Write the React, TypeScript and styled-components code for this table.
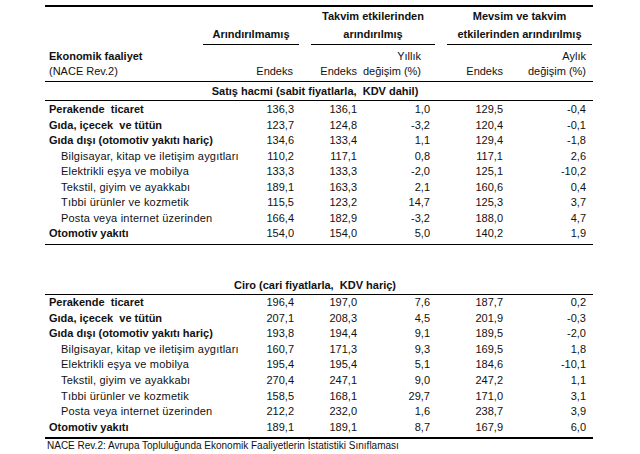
import React from "react";
import styled, { createGlobalStyle } from "styled-components";

const Global = createGlobalStyle`
  html, body { margin: 0; padding: 0; background: #fff; }
  body { font-family: "Liberation Sans", Arial, sans-serif; color: #111; }
`;

const Page = styled.div`
  width: 640px;
  height: 454px;
  box-sizing: border-box;
  padding: 5px 0 0 45px;
  overflow: hidden;
`;

const Table = styled.div`
  width: 548px;
  border-top: 2px solid #000;
`;

const GroupRow = styled.div`
  display: grid;
  grid-template-columns: 146px 96px 124px 145px;
  column-gap: 12px;
  align-items: end;
`;

const GroupCell = styled.div`
  font-size: 11px;
  font-weight: bold;
  line-height: 18px;
  text-align: center;
  padding-bottom: 1px;
  border-bottom: 1px solid #000;
`;

const COLS = "200px 54px 63px 74px 74px 83px";
const PADS = [0, 5, 5, 6, 7, 7];

const SubHead = styled.div`
  display: grid;
  grid-template-columns: ${COLS};
  padding: 4px 0 2px;
  border-bottom: 1px solid #000;
  font-size: 11px;
  line-height: 15px;
`;

const HeadLabel = styled.div<{ $bold?: boolean }>`
  padding-left: 4px;
  font-weight: ${(p) => (p.$bold ? "bold" : "normal")};
  white-space: nowrap;
`;

const HeadCell = styled.div<{ $pad: number }>`
  text-align: right;
  padding-right: ${(p) => p.$pad}px;
  white-space: nowrap;
`;

const SectionTitle = styled.div<{ $gap?: number }>`
  margin-top: ${(p) => p.$gap ?? 0}px;
  font-size: 11px;
  font-weight: bold;
  line-height: 18px;
  text-align: center;
  padding-right: 8px;
  border-bottom: 1px solid #000;
  white-space: pre;
`;

const Body = styled.div<{ $top: number; $bottom: number; $thick?: boolean }>`
  padding: ${(p) => p.$top}px 0 ${(p) => p.$bottom}px;
  border-bottom: ${(p) => (p.$thick ? 2 : 1)}px solid #000;
`;

const Row = styled.div<{ $h: number }>`
  display: grid;
  grid-template-columns: ${COLS};
  font-size: 11px;
  line-height: ${(p) => p.$h}px;
  height: ${(p) => p.$h}px;
`;

const Label = styled.div<{ $bold: boolean }>`
  padding-left: ${(p) => (p.$bold ? 4 : 16)}px;
  font-weight: ${(p) => (p.$bold ? "bold" : "normal")};
  letter-spacing: ${(p) => (p.$bold ? "0" : "0.2px")};
  white-space: pre;
`;

const Num = styled.div<{ $pad: number }>`
  text-align: right;
  padding-right: ${(p) => p.$pad}px;
`;

const Footer = styled.div`
  font-size: 10px;
  line-height: 14px;
  padding-left: 2px;
  white-space: nowrap;
`;

type R = [string, boolean, string, string, string, string, string];

const sales: R[] = [
  ["Perakende  ticaret", true, "136,3", "136,1", "1,0", "129,5", "-0,4"],
  ["Gıda, içecek  ve tütün", true, "123,7", "124,8", "-3,2", "120,4", "-0,1"],
  ["Gıda dışı (otomotiv yakıtı hariç)", true, "134,6", "133,4", "1,1", "129,4", "-1,8"],
  ["Bilgisayar, kitap ve iletişim aygıtları", false, "110,2", "117,1", "0,8", "117,1", "2,6"],
  ["Elektrikli eşya ve mobilya", false, "133,3", "133,3", "-2,0", "125,1", "-10,2"],
  ["Tekstil, giyim ve ayakkabı", false, "189,1", "163,3", "2,1", "160,6", "0,4"],
  ["Tıbbi ürünler ve kozmetik", false, "115,5", "123,2", "14,7", "125,3", "3,7"],
  ["Posta veya internet üzerinden", false, "166,4", "182,9", "-3,2", "188,0", "4,7"],
  ["Otomotiv yakıtı", true, "154,0", "154,0", "5,0", "140,2", "1,9"],
];

const ciro: R[] = [
  ["Perakende  ticaret", true, "196,4", "197,0", "7,6", "187,7", "0,2"],
  ["Gıda, içecek  ve tütün", true, "207,1", "208,3", "4,5", "201,9", "-0,3"],
  ["Gıda dışı (otomotiv yakıtı hariç)", true, "193,8", "194,4", "9,1", "189,5", "-2,0"],
  ["Bilgisayar, kitap ve iletişim aygıtları", false, "160,7", "171,3", "9,3", "169,5", "1,8"],
  ["Elektrikli eşya ve mobilya", false, "195,4", "195,4", "5,1", "184,6", "-10,1"],
  ["Tekstil, giyim ve ayakkabı", false, "270,4", "247,1", "9,0", "247,2", "1,1"],
  ["Tıbbi ürünler ve kozmetik", false, "158,5", "168,1", "29,7", "171,0", "3,1"],
  ["Posta veya internet üzerinden", false, "212,2", "232,0", "1,6", "238,7", "3,9"],
  ["Otomotiv yakıtı", true, "189,1", "189,1", "8,7", "167,9", "6,0"],
];

const Rows: React.FC<{ data: R[]; h: number }> = ({ data, h }) => (
  <>
    {data.map(([label, bold, ...nums]) => (
      <Row key={label} $h={h}>
        <Label $bold={bold}>{label}</Label>
        {nums.map((n, i) => (
          <Num key={i} $pad={PADS[i + 1]}>
            {n}
          </Num>
        ))}
      </Row>
    ))}
  </>
);

export default function App() {
  return (
    <Page>
      <Global />
      <Table>
        <GroupRow>
          <div />
          <GroupCell>Arındırılmamış</GroupCell>
          <GroupCell>
            Takvim etkilerinden
            <br />
            arındırılmış
          </GroupCell>
          <GroupCell>
            Mevsim ve takvim
            <br />
            etkilerinden arındırılmış
          </GroupCell>
        </GroupRow>
        <SubHead>
          <HeadLabel $bold>Ekonomik faaliyet</HeadLabel>
          <div />
          <div />
          <HeadCell $pad={15}>Yıllık</HeadCell>
          <div />
          <HeadCell $pad={7}>Aylık</HeadCell>
          <HeadLabel>(NACE Rev.2)</HeadLabel>
          <HeadCell $pad={6}>Endeks</HeadCell>
          <HeadCell $pad={5}>Endeks</HeadCell>
          <HeadCell $pad={15}>değişim (%)</HeadCell>
          <HeadCell $pad={7}>Endeks</HeadCell>
          <HeadCell $pad={7}>değişim (%)</HeadCell>
        </SubHead>
        <SectionTitle>Satış hacmi (sabit fiyatlarla,  KDV dahil)</SectionTitle>
        <Body $top={1} $bottom={2.5}>
          <Rows data={sales} h={15.5} />
        </Body>
        <SectionTitle $gap={31}>Ciro (cari fiyatlarla,  KDV hariç)</SectionTitle>
        <Body $top={0} $bottom={2} $thick>
          <Rows data={ciro} h={15.6} />
        </Body>
        <Footer>NACE Rev.2: Avrupa Topluluğunda Ekonomik Faaliyetlerin İstatistiki Sınıflaması</Footer>
      </Table>
    </Page>
  );
}
